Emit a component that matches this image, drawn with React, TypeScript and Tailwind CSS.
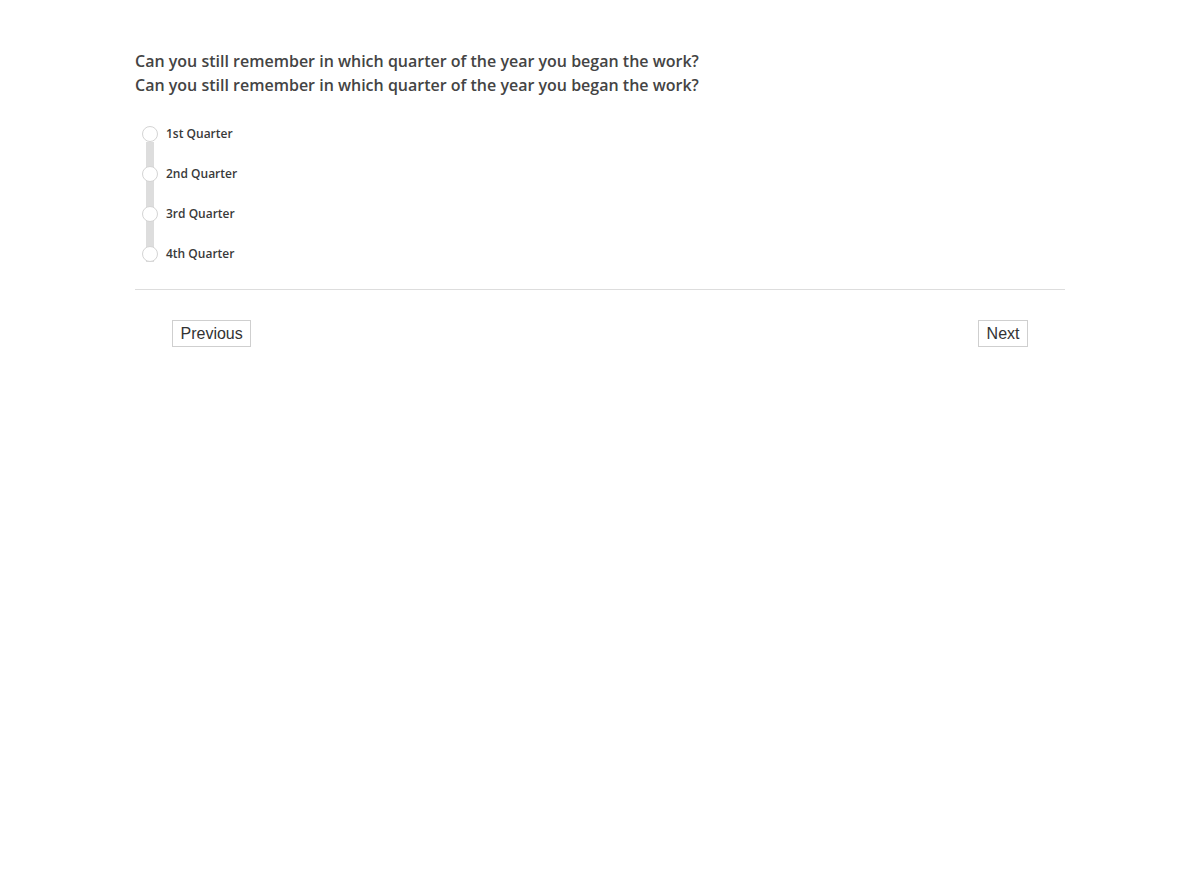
const options = ['1st Quarter', '2nd Quarter', '3rd Quarter', '4th Quarter'];

export default function App() {
  return (
    <div className="min-h-screen bg-white" style={{ fontFamily: '"Open Sans", sans-serif' }}>
      <div className="mx-auto w-[930px] pt-[49px]">
        {/* Question */}
        <div className="text-[16px] leading-[24px] font-semibold text-[#444444]">
          <p>Can you still remember in which quarter of the year you began the work?</p>
          <p>Can you still remember in which quarter of the year you began the work?</p>
        </div>

        {/* Radio list with connecting bar */}
        <div className="relative mt-[29px] pl-[7px]">
          <div className="absolute left-[11px] top-[16px] h-[120px] w-[8px] bg-[#dddddd]" />
          <div className="relative flex flex-col gap-[24px]">
            {options.map((o) => (
              <label key={o} className="flex h-[16px] items-center gap-[8px] cursor-pointer">
                <span className="h-[16px] w-[16px] rounded-full border border-[#d4d4d4] bg-white" />
                <span className="text-[12px] font-semibold text-[#3a3a3a]">{o}</span>
              </label>
            ))}
          </div>
        </div>

        <hr className="mt-[27px] border-0 border-t border-[#dddddd]" />

        {/* Navigation */}
        <div className="flex justify-between px-[37px] pt-[30px]">
          <button
            className="h-[27px] border border-[#cfcfcf] bg-white px-[7.5px] text-[16px] text-[#333333]"
            style={{ fontFamily: '"Liberation Sans", Arial, sans-serif' }}
          >
            Previous
          </button>
          <button
            className="h-[27px] border border-[#cfcfcf] bg-white px-[7.5px] text-[16px] text-[#333333]"
            style={{ fontFamily: '"Liberation Sans", Arial, sans-serif' }}
          >
            Next
          </button>
        </div>
      </div>
    </div>
  );
}
